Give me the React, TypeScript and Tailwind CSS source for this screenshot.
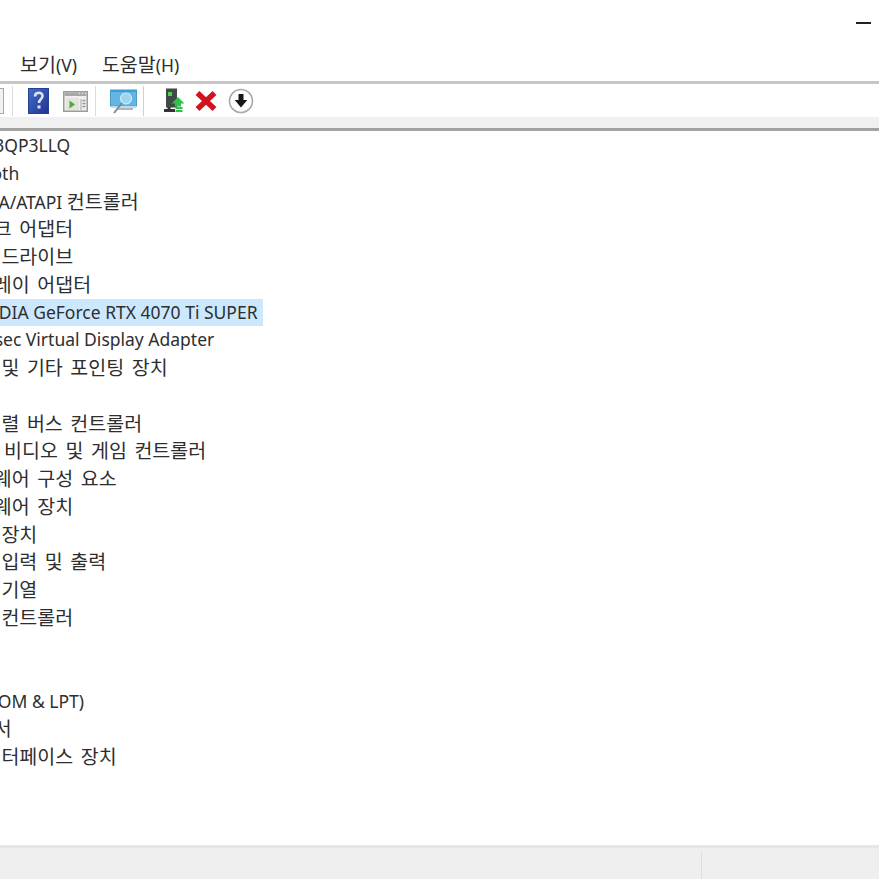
const font = "font-['Noto_Sans','Noto_Sans_CJK_KR',sans-serif]";

const rows: { t: string; c: string }[] = [
  { t: "DESKTOP-3QP3LLQ", c: "pl-[2px]" },
  { t: "Bluetooth", c: "pl-[28px]" },
  { t: "IDE ATA/ATAPI 컨트롤러", c: "pl-[37px]" },
  { t: "네트워크 어댑터", c: "pl-[30px]" },
  { t: "디스크 드라이브", c: "pl-[30px]" },
  { t: "디스플레이 어댑터", c: "pl-[30px]" },
  { t: "NVIDIA GeForce RTX 4070 Ti SUPER", c: "pl-[59px]" },
  { t: "Parsec Virtual Display Adapter", c: "pl-[57px]" },
  { t: "마우스 및 기타 포인팅 장치", c: "pl-[30px]" },
  { t: "모니터", c: "pl-[30px]" },
  { t: "범용 직렬 버스 컨트롤러", c: "pl-[30px]" },
  { t: "사운드, 비디오 및 게임 컨트롤러", c: "pl-[31px]" },
  { t: "소프트웨어 구성 요소", c: "pl-[30px]" },
  { t: "소프트웨어 장치", c: "pl-[30px]" },
  { t: "시스템 장치", c: "pl-[30px]" },
  { t: "오디오 입력 및 출력", c: "pl-[30px]" },
  { t: "인쇄 대기열", c: "pl-[30px]" },
  { t: "저장소 컨트롤러", c: "pl-[30px]" },
  { t: "컴퓨터", c: "pl-[30px]" },
  { t: "키보드", c: "pl-[30px]" },
  { t: "포트(COM & LPT)", c: "pl-[36px]" },
  { t: "프로세서", c: "pl-[30px]" },
  { t: "휴먼 인터페이스 장치", c: "pl-[30px]" },
];

function Mixed({ t }: { t: string }) {
  const parts = t.split(/([가-힣]+(?: [가-힣]+)*)/);
  return (
    <>
      {parts.map((p, i) =>
        i % 2 === 1 ? (
          <span key={i} className="text-[19.5px] [word-spacing:2.5px]">{p}</span>
        ) : (
          <span key={i}>{p}</span>
        )
      )}
    </>
  );
}

function Help() {
  return (
    <svg width="21" height="26" viewBox="0 0 21 26" className="block">
      <defs>
        <linearGradient id="h" x1="0" y1="0" x2="1" y2="1">
          <stop offset="0" stopColor="#3f6fd0" />
          <stop offset="1" stopColor="#22328c" />
        </linearGradient>
      </defs>
      <rect x="0.500" y="0.500" width="20" height="25" fill="url(#h)" stroke="#27408f" />
      <path d="M7 8.500c0-5 7.500-5 7.500-.5 0 3-3.500 3.500-3.500 7" fill="none" stroke="#dfe2f4" strokeWidth="2.600" />
      <rect x="9.500" y="17.500" width="3" height="3" fill="#dfe2f4" />
    </svg>
  );
}

function Props() {
  return (
    <svg width="25" height="21" viewBox="0 0 25 21" className="block">
      <rect x="0.750" y="0.750" width="23.500" height="19.500" fill="#efefef" stroke="#9c9c9c" strokeWidth="1.500" />
      <rect x="1.500" y="1.500" width="22" height="3.500" fill="#a8a8a8" />
      <path d="M16 2.500h1M19 2.500h1M22 2.500h1" stroke="#eee" />
      <rect x="3" y="7" width="13" height="12" fill="#e0e4dc" />
      <path d="M6.500 9.500l5.500 4-5.500 4z" fill="#55a83a" />
      <path d="M18 8v11" stroke="#a8a8a8" />
      <path d="M19.500 9.500h3M19.500 12.500h3M19.500 15.500h3" stroke="#8a9aa0" strokeWidth="1.500" />
    </svg>
  );
}

function Monitor() {
  return (
    <svg width="27" height="26" viewBox="0 0 27 26" className="block">
      <rect x="0.500" y="1" width="26" height="16" fill="#62b6e6" stroke="#4b9ccb" />
      <rect x="1" y="1" width="25" height="2" fill="#3d9ed6" />
      <rect x="1" y="17" width="25" height="2" fill="#b9dcee" />
      <circle cx="16" cy="9.500" r="5.500" fill="#a0d4ee" stroke="#cfeaf6" strokeWidth="1.200" />
      <path d="M12 14l-8 10" stroke="#7c8a92" strokeWidth="2" />
      <path d="M8 20h15" stroke="#9aa4aa" strokeWidth="1.600" />
    </svg>
  );
}

function Driver() {
  return (
    <svg width="22" height="25" viewBox="0 0 22 25" className="block">
      <rect x="3" y="0.500" width="11" height="19" fill="#3e4a44" />
      <rect x="5" y="4" width="4" height="4" fill="#4fd04a" />
      <path d="M1 22.500h11" stroke="#333" strokeWidth="3" />
      <path d="M6 19v2" stroke="#333" strokeWidth="3" />
      <path d="M15 9l6.500 6.500H18v3h-6v-3H8.500z" fill="#2fc24a" />
      <path d="M12.500 20h7M12.500 23h7" stroke="#2fc24a" strokeWidth="2" />
    </svg>
  );
}

function Cross() {
  return (
    <svg width="22" height="20" viewBox="0 0 22 20" className="block">
      <path d="M2.500 2l17 16M19.500 2l-17 16" stroke="#d3121f" strokeWidth="5.500" />
    </svg>
  );
}

function Down() {
  return (
    <svg width="26" height="26" viewBox="0 0 26 26" className="block">
      <circle cx="13" cy="13" r="11.500" fill="#fdfdfd" stroke="#a9a9a9" strokeWidth="1.600" />
      <path d="M10.500 6h5v6h3.800L13 19.500 6.700 12h3.800z" fill="#161616" />
    </svg>
  );
}

export default function App() {
  return (
    <div className={`${font} flex flex-col w-[879px] h-[879px] overflow-hidden bg-white text-[#2e2e2e]`}>
      <div className="flex justify-end h-[49px] pt-[22px] pr-[8px] shrink-0">
        <div className="w-[15px] h-[2px] bg-[#222]" />
      </div>
      <div className="flex items-center h-[32px] shrink-0 text-[17.5px] pl-[20px] gap-[25px]">
        <span><Mixed t="보기" />(V)</span>
        <span><Mixed t="도움말" />(H)</span>
      </div>
      <div className="h-[3px] bg-[#c6c6c6] shrink-0" />
      <div className="flex items-center h-[33px] shrink-0 bg-white">
        <div className="w-[4px] h-[26px] border border-l-0 border-[#a8a8a8] bg-[#f2f2f2]" />
        <div className="w-px h-[30px] bg-[#dcdcdc] ml-[8px]" />
        <div className="ml-[15px]"><Help /></div>
        <div className="ml-[14px] mt-[2px]"><Props /></div>
        <div className="w-px h-[30px] bg-[#dcdcdc] ml-[7px]" />
        <div className="ml-[14px] mt-[2px]"><Monitor /></div>
        <div className="w-px h-[30px] bg-[#d0d0d0] ml-[6px]" />
        <div className="ml-[19px]"><Driver /></div>
        <div className="ml-[10px]"><Cross /></div>
        <div className="ml-[11px]"><Down /></div>
      </div>
      <div className="h-[11px] bg-[#f0f0f0] shrink-0" />
      <div className="h-[3px] bg-[#a2a2a2] shrink-0" />
      <div className="flex-1 overflow-hidden pt-px">
        <div className="-ml-[90px] text-[17.5px]">
          {rows.map((r, i) => (
            <div key={i} className={`${r.c} h-[27.78px] leading-[27.78px] whitespace-nowrap`}>
              <span className={i === 6 ? "inline-block bg-[#cce8ff] pr-[5px] pl-[4px] -ml-[4px]" : ""}><Mixed t={r.t} /></span>
            </div>
          ))}
        </div>
      </div>
      <div className="h-[3px] bg-[#e6e6e6] shrink-0" />
      <div className="flex h-[31px] bg-[#efefef] shrink-0 pt-[3px]">
        <div className="w-[702px] border-r border-[#dedede]" />
      </div>
    </div>
  );
}
